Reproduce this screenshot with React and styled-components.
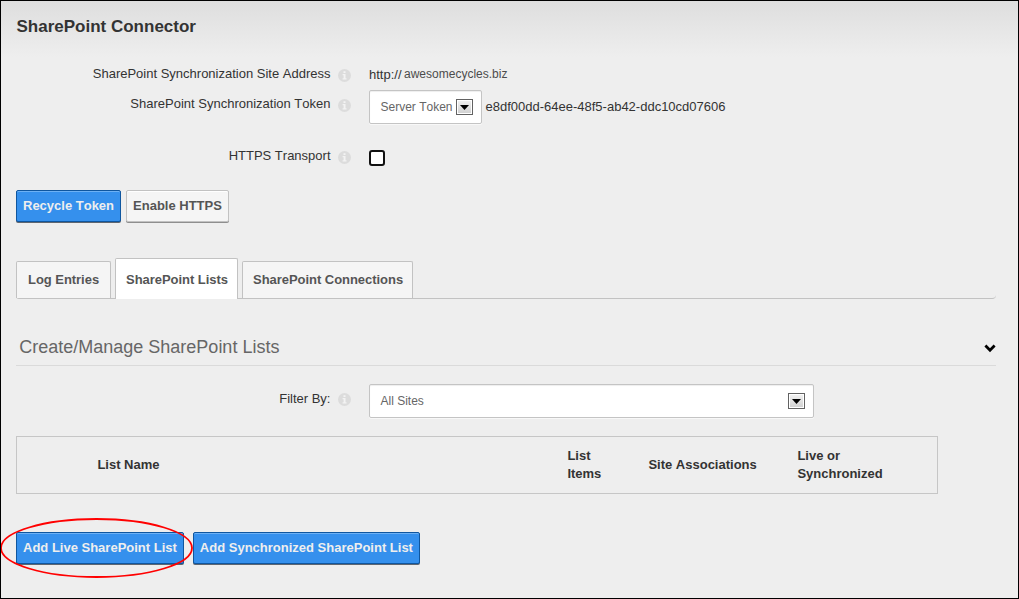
import React from 'react';
import styled, { createGlobalStyle } from 'styled-components';

const GlobalStyle = createGlobalStyle`
  * { box-sizing: border-box; }
  body {
    margin: 0;
    background: #eee;
    color: #333;
    font: 13px/18px "Liberation Sans", Arial, sans-serif;
    font-kerning: none;
  }
  button, input { font: inherit; font-kerning: none; }
`;

const Page = styled.main`
  position: relative;
  width: 1019px;
  height: 599px;
  padding: 16px 22px 0 15px;
  border: 1px solid #000;
  background: #eee linear-gradient(#dedede, #eee 56px) no-repeat;
  overflow: hidden;
`;

const Title = styled.h1`
  margin: 0 0 28px;
  padding-left: 0.5px;
  font-size: 17px;
  line-height: 20px;
  font-weight: bold;
`;

const FormRow = styled.div`
  display: grid;
  grid-template-columns: 315px 38px auto;
  align-items: start;
  height: ${(p) => p.$height}px;
`;

const Label = styled.label`
  padding-top: ${(p) => p.$top || 0}px;
  padding-right: 0.5px;
  text-align: right;
`;

const InfoSlot = styled.span`
  display: flex;
  padding: ${(p) => (p.$top || 0) + 4}px 0 0 7px;
`;

const Value = styled.div`
  display: flex;
  align-items: ${(p) => p.$align || 'center'};
  gap: ${(p) => p.$gap || 0}px;
  padding-top: ${(p) => p.$top || 0}px;
`;

const Scheme = styled.span`
  padding-top: 1px;
`;

const Host = styled.span`
  color: #4c4c4c;
  font-size: 12px;
`;

const SelectBox = styled.div`
  display: flex;
  align-items: center;
  justify-content: space-between;
  width: ${(p) => p.$width}px;
  height: 34px;
  padding: 0 8px 0 10.5px;
  border: 1px solid #c4c4c4;
  border-radius: 2px;
  background: #fff;
  box-shadow: inset 0 1px 1px #eee, 0 1px 0 #f8f8f8;
  color: #666;
  font-size: 12px;
`;

const DropButton = styled.span`
  display: flex;
  align-items: center;
  justify-content: center;
  width: 17px;
  height: 16px;
  border: 1px solid #626262;
  background: linear-gradient(#f3f3f3, #cfcfcf);
  box-shadow: inset 0 0 0 1px #fff;
`;

const Checkbox = styled.input`
  appearance: none;
  width: 16px;
  height: 16px;
  margin: 0;
  border: 2px solid #111;
  border-radius: 3px;
  background: #fff;
`;

const ButtonRow = styled.div`
  display: flex;
  gap: ${(p) => p.$gap}px;
`;

const Button = styled.button`
  height: 32px;
  margin-bottom: 1px;
  padding: 0 6px;
  border: 1px solid ${(p) => (p.$primary ? '#0f569f' : '#c2c2c2')};
  border-radius: 2px;
  background: ${(p) => (p.$primary ? '#3590ed' : '#f5f5f5')};
  box-shadow:
    inset 0 1px 0 ${(p) => (p.$primary ? '#6db1f5' : '#fff')},
    0 1px 0 ${(p) => (p.$primary ? '#5f6670' : '#8e8e8e')};
  color: ${(p) => (p.$primary ? '#eee' : '#555')};
  font-weight: bold;
  white-space: nowrap;
`;

const Tabs = styled.nav`
  display: flex;
  align-items: flex-end;
  gap: 4px;
  height: 41px;
  margin-top: 35px;
  width: 980px;
  border-bottom: 1px solid #c2c2c2;
  border-radius: 0 0 4px 3px;
`;

const Tab = styled.a`
  width: ${(p) => p.$width}px;
  height: ${(p) => (p.$active ? 41 : 37)}px;
  margin-bottom: ${(p) => (p.$active ? -1 : 0)}px;
  padding: ${(p) => (p.$active ? '12px 0 0 10px' : '9px 0 0 ' + p.$pad + 'px')};
  border: 1px solid #c2c2c2;
  border-bottom: 0;
  border-radius: 2px 2px 0 0;
  background: ${(p) => (p.$active ? '#fff' : '#f5f5f5')};
  color: #555;
  font-weight: bold;
  letter-spacing: -0.04px;
  white-space: nowrap;
`;

const SectionHeader = styled.header`
  display: flex;
  justify-content: space-between;
  width: 980px;
  height: 30px;
  margin: 37px 0 18px;
  padding-left: 3.25px;
  border-bottom: 1px solid #dadada;
`;

const SectionTitle = styled.h2`
  margin: 0;
  color: #666;
  font-size: 18px;
  line-height: 22px;
  font-weight: normal;
`;

const Chevron = styled.svg`
  margin-top: 8px;
`;

const TableHead = styled.div`
  display: grid;
  grid-template-columns: 470px 81px 149px 1fr;
  align-items: center;
  width: 922px;
  height: 58px;
  margin-bottom: 38px;
  padding-left: 80.4px;
  border: 1px solid #c6c6c6;
  font-weight: bold;
`;

const Highlight = styled.svg`
  position: absolute;
  left: -1px;
  top: 516px;
  pointer-events: none;
`;

function Info({ top }) {
  return (
    <InfoSlot $top={top}>
      <svg width="13" height="13" viewBox="0 0 13 13">
        <circle cx="6.5" cy="6.5" r="6.5" fill="#dcdcdc" />
        <path d="M5.5 2.2h2v1.8h-2zM4.6 5.1h2.9v4.1h1v1.2H4.6V9.2h1V6.3h-1z" fill="#f3f3f3" />
      </svg>
    </InfoSlot>
  );
}

function Select({ width, children }) {
  return (
    <SelectBox $width={width}>
      {children}
      <DropButton>
        <svg width="9" height="5" viewBox="0 0 9 5">
          <path d="M0 0h9L4.5 5z" fill="#000" />
        </svg>
      </DropButton>
    </SelectBox>
  );
}

export default function App() {
  return (
    <>
      <GlobalStyle />
      <Page>
        <Title>SharePoint Connector</Title>

        <FormRow $height={25}>
          <Label>SharePoint Synchronization Site Address</Label>
          <Info />
          <Value $gap={2.5} $align="flex-start">
            <Scheme>http://</Scheme>
            <Host>awesomecycles.biz</Host>
          </Value>
        </FormRow>
        <FormRow $height={57}>
          <Label $top={5}>SharePoint Synchronization Token</Label>
          <Info top={5} />
          <Value $gap={3.5}>
            <Select width={113}>Server Token</Select>
            <span>e8df00dd-64ee-48f5-ab42-ddc10cd07606</span>
          </Value>
        </FormRow>
        <FormRow $height={43}>
          <Label htmlFor="https">HTTPS Transport</Label>
          <Info />
          <Value $top={3}>
            <Checkbox id="https" type="checkbox" />
          </Value>
        </FormRow>

        <ButtonRow $gap={5}>
          <Button $primary>Recycle Token</Button>
          <Button>Enable HTTPS</Button>
        </ButtonRow>

        <Tabs>
          <Tab $width={95} $pad={11}>Log Entries</Tab>
          <Tab $width={123} $active>SharePoint Lists</Tab>
          <Tab $width={171} $pad={10}>SharePoint Connections</Tab>
        </Tabs>

        <SectionHeader>
          <SectionTitle>Create/Manage SharePoint Lists</SectionTitle>
          <Chevron width="12" height="9" viewBox="0 0 12 9">
            <path d="M1.4 1.6L6 6.2l4.6-4.6" fill="none" stroke="#000" strokeWidth="2.8" />
          </Chevron>
        </SectionHeader>

        <FormRow $height={52}>
          <Label $top={6}>Filter By:</Label>
          <Info top={5} />
          <Value>
            <Select width={445}>All Sites</Select>
          </Value>
        </FormRow>

        <TableHead>
          <span>List Name</span>
          <span>List<br />Items</span>
          <span>Site Associations</span>
          <span>Live or<br />Synchronized</span>
        </TableHead>

        <ButtonRow $gap={9}>
          <Button $primary>Add Live SharePoint List</Button>
          <Button $primary>Add Synchronized SharePoint List</Button>
        </ButtonRow>

        <Highlight width="194" height="62" viewBox="0 0 194 62">
          <ellipse cx="96.5" cy="31" rx="95.5" ry="29" fill="none" stroke="#f00" strokeWidth="1.8" />
        </Highlight>
      </Page>
    </>
  );
}
